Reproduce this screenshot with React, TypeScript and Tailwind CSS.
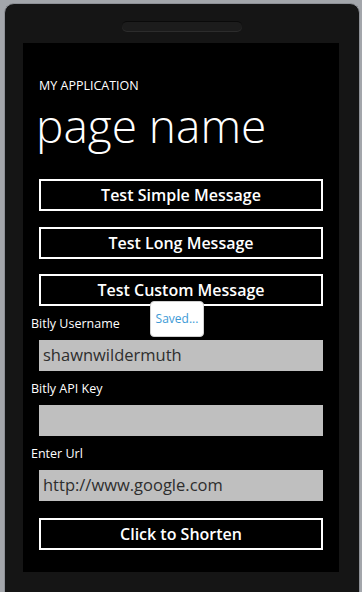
const font = { fontFamily: '"Open Sans", "Noto Sans", sans-serif' };

function OutlineButton({ label }: { label: string }) {
  return (
    <button className="flex h-[32px] w-[284px] items-center justify-center border-2 border-white bg-black text-[16px] font-semibold leading-none text-white">
      {label}
    </button>
  );
}

function Field({ label, value }: { label: string; value: string }) {
  return (
    <div className="flex flex-col">
      <span className="ml-[8px] h-[18px] text-[12.5px] leading-[18px] text-white">{label}</span>
      <div className="ml-[16px] mt-[7px] flex h-[31px] w-[284px] items-center bg-[#bfbfbf] px-[4px] text-[16.5px] text-[#2e2e2e]">
        {value}
      </div>
    </div>
  );
}

export default function App() {
  return (
    <div className="h-[592px] w-[362px] overflow-hidden bg-[#a3a6ab]" style={font}>
      <div className="ml-[4px] mt-[3px] h-[600px] w-[356px] rounded-t-[10px] border border-[#8d9096] bg-[#151515] pt-[17px]">
        <div className="mx-auto h-[10px] w-[120px] rounded-full border-t border-[#0a0a0a] bg-[#1c1c1c] shadow-[0_1px_0_#2c2c2c]" />
        <div className="relative ml-[18px] mt-[12px] h-[529px] w-[316px] bg-black">
          <div className="flex flex-col pt-[34px]">
            <span className="ml-[16px] text-[12.5px] leading-[18px] text-white">MY APPLICATION</span>
            <span className="ml-[13px] mt-[2px] text-[46px] font-light leading-[56px] text-white">page name</span>
            <div className="ml-[16px] mt-[26px] flex flex-col gap-[15.5px]">
              <OutlineButton label="Test Simple Message" />
              <OutlineButton label="Test Long Message" />
              <OutlineButton label="Test Custom Message" />
            </div>
            <div className="mt-[9px] flex flex-col gap-[9px]">
              <Field label="Bitly Username" value="shawnwildermuth" />
              <Field label="Bitly API Key" value="" />
              <Field label="Enter Url" value="http://www.google.com" />
            </div>
            <div className="ml-[16px] mt-[17px]">
              <OutlineButton label="Click to Shorten" />
            </div>
          </div>
          <div className="absolute left-[127px] top-[258px] flex h-[36px] w-[54px] items-center justify-center rounded-[4px] border border-[#d0d0d0] bg-white text-[12px] text-[#3d9ad6]">
            Saved...
          </div>
        </div>
      </div>
    </div>
  );
}
